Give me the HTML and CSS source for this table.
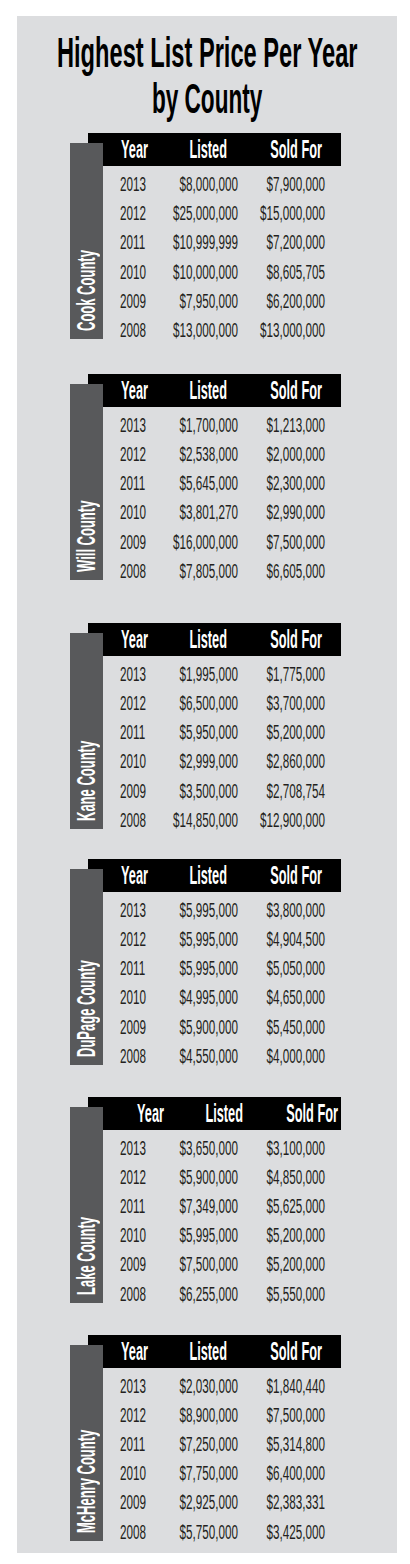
FILE: index.html
```html
<!DOCTYPE html>
<html lang="en">
<head>
<meta charset="utf-8">
<title>Highest List Price Per Year by County</title>
<link rel="stylesheet" href="styles.css">
</head>
<body>
<main class="panel">
  <h1 class="title"><span class="title-line t1">Highest List Price Per Year</span><span class="title-line t2">by County</span></h1>

  <section class="county gap-cook">
    <div class="label"><span class="label-text">Cook County</span></div>
    <div class="content">
      <div class="bar"><div class="bar-grid"><span class="h-year">Year</span><span class="h-listed">Listed</span><span class="h-sold">Sold For</span></div></div>
      <div class="rows">
        <div class="row"><span class="c-year">2013</span><span class="c-num">$8,000,000</span><span class="c-num">$7,900,000</span></div>
        <div class="row"><span class="c-year">2012</span><span class="c-num">$25,000,000</span><span class="c-num">$15,000,000</span></div>
        <div class="row"><span class="c-year">2011</span><span class="c-num">$10,999,999</span><span class="c-num">$7,200,000</span></div>
        <div class="row"><span class="c-year">2010</span><span class="c-num">$10,000,000</span><span class="c-num">$8,605,705</span></div>
        <div class="row"><span class="c-year">2009</span><span class="c-num">$7,950,000</span><span class="c-num">$6,200,000</span></div>
        <div class="row"><span class="c-year">2008</span><span class="c-num">$13,000,000</span><span class="c-num">$13,000,000</span></div>
      </div>
    </div>
  </section>

  <section class="county gap-will">
    <div class="label"><span class="label-text">Will County</span></div>
    <div class="content">
      <div class="bar"><div class="bar-grid"><span class="h-year">Year</span><span class="h-listed">Listed</span><span class="h-sold">Sold For</span></div></div>
      <div class="rows">
        <div class="row"><span class="c-year">2013</span><span class="c-num">$1,700,000</span><span class="c-num">$1,213,000</span></div>
        <div class="row"><span class="c-year">2012</span><span class="c-num">$2,538,000</span><span class="c-num">$2,000,000</span></div>
        <div class="row"><span class="c-year">2011</span><span class="c-num">$5,645,000</span><span class="c-num">$2,300,000</span></div>
        <div class="row"><span class="c-year">2010</span><span class="c-num">$3,801,270</span><span class="c-num">$2,990,000</span></div>
        <div class="row"><span class="c-year">2009</span><span class="c-num">$16,000,000</span><span class="c-num">$7,500,000</span></div>
        <div class="row"><span class="c-year">2008</span><span class="c-num">$7,805,000</span><span class="c-num">$6,605,000</span></div>
      </div>
    </div>
  </section>

  <section class="county gap-kane">
    <div class="label"><span class="label-text">Kane County</span></div>
    <div class="content">
      <div class="bar"><div class="bar-grid"><span class="h-year">Year</span><span class="h-listed">Listed</span><span class="h-sold">Sold For</span></div></div>
      <div class="rows">
        <div class="row"><span class="c-year">2013</span><span class="c-num">$1,995,000</span><span class="c-num">$1,775,000</span></div>
        <div class="row"><span class="c-year">2012</span><span class="c-num">$6,500,000</span><span class="c-num">$3,700,000</span></div>
        <div class="row"><span class="c-year">2011</span><span class="c-num">$5,950,000</span><span class="c-num">$5,200,000</span></div>
        <div class="row"><span class="c-year">2010</span><span class="c-num">$2,999,000</span><span class="c-num">$2,860,000</span></div>
        <div class="row"><span class="c-year">2009</span><span class="c-num">$3,500,000</span><span class="c-num">$2,708,754</span></div>
        <div class="row"><span class="c-year">2008</span><span class="c-num">$14,850,000</span><span class="c-num">$12,900,000</span></div>
      </div>
    </div>
  </section>

  <section class="county gap-std">
    <div class="label"><span class="label-text">DuPage County</span></div>
    <div class="content">
      <div class="bar"><div class="bar-grid"><span class="h-year">Year</span><span class="h-listed">Listed</span><span class="h-sold">Sold For</span></div></div>
      <div class="rows">
        <div class="row"><span class="c-year">2013</span><span class="c-num">$5,995,000</span><span class="c-num">$3,800,000</span></div>
        <div class="row"><span class="c-year">2012</span><span class="c-num">$5,995,000</span><span class="c-num">$4,904,500</span></div>
        <div class="row"><span class="c-year">2011</span><span class="c-num">$5,995,000</span><span class="c-num">$5,050,000</span></div>
        <div class="row"><span class="c-year">2010</span><span class="c-num">$4,995,000</span><span class="c-num">$4,650,000</span></div>
        <div class="row"><span class="c-year">2009</span><span class="c-num">$5,900,000</span><span class="c-num">$5,450,000</span></div>
        <div class="row"><span class="c-year">2008</span><span class="c-num">$4,550,000</span><span class="c-num">$4,000,000</span></div>
      </div>
    </div>
  </section>

  <section class="county gap-std">
    <div class="label"><span class="label-text">Lake County</span></div>
    <div class="content">
      <div class="bar"><div class="bar-grid bar-shift"><span class="h-year">Year</span><span class="h-listed">Listed</span><span class="h-sold">Sold For</span></div></div>
      <div class="rows">
        <div class="row"><span class="c-year">2013</span><span class="c-num">$3,650,000</span><span class="c-num">$3,100,000</span></div>
        <div class="row"><span class="c-year">2012</span><span class="c-num">$5,900,000</span><span class="c-num">$4,850,000</span></div>
        <div class="row"><span class="c-year">2011</span><span class="c-num">$7,349,000</span><span class="c-num">$5,625,000</span></div>
        <div class="row"><span class="c-year">2010</span><span class="c-num">$5,995,000</span><span class="c-num">$5,200,000</span></div>
        <div class="row"><span class="c-year">2009</span><span class="c-num">$7,500,000</span><span class="c-num">$5,200,000</span></div>
        <div class="row"><span class="c-year">2008</span><span class="c-num">$6,255,000</span><span class="c-num">$5,550,000</span></div>
      </div>
    </div>
  </section>

  <section class="county gap-last">
    <div class="label"><span class="label-text">McHenry County</span></div>
    <div class="content">
      <div class="bar"><div class="bar-grid"><span class="h-year">Year</span><span class="h-listed">Listed</span><span class="h-sold">Sold For</span></div></div>
      <div class="rows">
        <div class="row"><span class="c-year">2013</span><span class="c-num">$2,030,000</span><span class="c-num">$1,840,440</span></div>
        <div class="row"><span class="c-year">2012</span><span class="c-num">$8,900,000</span><span class="c-num">$7,500,000</span></div>
        <div class="row"><span class="c-year">2011</span><span class="c-num">$7,250,000</span><span class="c-num">$5,314,800</span></div>
        <div class="row"><span class="c-year">2010</span><span class="c-num">$7,750,000</span><span class="c-num">$6,400,000</span></div>
        <div class="row"><span class="c-year">2009</span><span class="c-num">$2,925,000</span><span class="c-num">$2,383,331</span></div>
        <div class="row"><span class="c-year">2008</span><span class="c-num">$5,750,000</span><span class="c-num">$3,425,000</span></div>
      </div>
    </div>
  </section>
</main>
</body>
</html>
```

FILE: styles.css
```css
* { box-sizing: border-box; }

:root {
  --sx-data: 0.6;
  --sx-head: 0.51;
}

html, body {
  margin: 0;
  padding: 0;
  background: #ffffff;
}

body {
  font-family: "Liberation Sans", Arial, sans-serif;
}

.panel {
  display: block;
  width: 380px;
  margin: 16px 0 0 17px;
  padding: 13px 0 6px 0;
  background: #dcdddf;
}

/* Title: condensed look via horizontal scaling */
.title {
  display: flex;
  flex-direction: column;
  align-items: center;
  margin: 0 0 12px 0;
  font-size: 43px;
  line-height: 46px;
  font-weight: 700;
  color: #000;
  white-space: nowrap;
}

.title-line {
  display: block;
  transform-origin: center;
}

.t1 { transform: scaleX(0.55); }
.t2 { transform: scaleX(0.525); }

.county {
  display: flex;
  align-items: flex-start;
  padding-left: 53px;
}

.gap-cook { margin-bottom: 28.8px; }
.gap-will { margin-bottom: 36.8px; }
.gap-kane { margin-bottom: 23.8px; }
.gap-std  { margin-bottom: 25.8px; }
.gap-last { margin-bottom: 0; }

.label {
  position: relative;
  z-index: 1;
  flex: 0 0 33px;
  width: 33px;
  height: 196px;
  margin-top: 10px;
  background: #58595b;
  color: #ffffff;
  writing-mode: vertical-rl;
  transform: rotate(180deg);
  padding-top: 8px;
  font-size: 25px;
  line-height: 33px;
  font-weight: 700;
  white-space: nowrap;
}

.label-text {
  display: inline-block;
  transform: scaleY(0.52);
  transform-origin: top center;
}

.content {
  flex: 0 0 253px;
  width: 253px;
  margin-left: -15px;
}

.bar {
  height: 33px;
  background: #000;
  color: #fff;
  overflow: visible;
}

.bar-grid {
  display: grid;
  grid-template-columns: calc(40px / var(--sx-head)) calc(78px / var(--sx-head)) calc(87px / var(--sx-head));
  width: max-content;
  padding-left: calc(33px / var(--sx-head));
  transform: scaleX(var(--sx-head));
  transform-origin: left center;
  font-size: 25px;
  line-height: 32px;
  font-weight: 700;
  white-space: nowrap;
}

.bar-shift { padding-left: calc(49px / var(--sx-head)); }

.h-year { text-align: left; }
.h-listed { text-align: right; padding-right: calc(12px / var(--sx-head)); }
.h-sold { text-align: right; padding-right: calc(4px / var(--sx-head)); }

.rows {
  padding-top: 4px;
}

.row {
  display: grid;
  grid-template-columns: calc(40px / var(--sx-data)) calc(78px / var(--sx-data)) calc(87px / var(--sx-data));
  width: max-content;
  padding-left: calc(32px / var(--sx-data));
  height: 29.2px;
  transform: scaleX(var(--sx-data));
  transform-origin: left center;
  font-size: 19.5px;
  line-height: 29.2px;
  font-weight: 400;
  color: #231f20;
  white-space: nowrap;
}

.c-year { text-align: left; }
.c-num { text-align: right; }
```
